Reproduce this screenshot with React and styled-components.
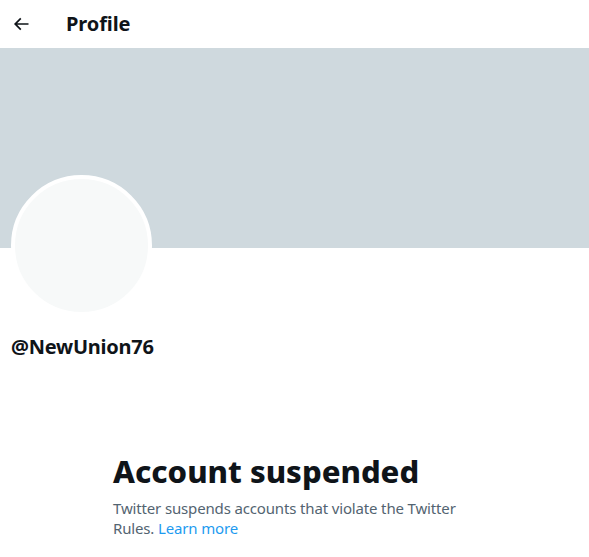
import React from 'react';
import styled, { createGlobalStyle } from 'styled-components';

const GlobalStyle = createGlobalStyle`
  body {
    margin: 0;
    background: #ffffff;
    font-family: "Segoe UI", "Noto Sans", Roboto, sans-serif;
    color: #0f1419;
  }
`;

const Page = styled.div`
  width: 589px;
`;

const TopBar = styled.header`
  height: 48px;
  display: flex;
  align-items: center;
  padding: 0 11px;
  gap: 35px;
  box-sizing: border-box;
  h2 {
    margin: 0;
    font-size: 20px;
    font-weight: 700;
    line-height: 24px;
    letter-spacing: -0.1px;
  }
`;

const BackButton = styled.div`
  width: 20px;
  height: 20px;
  display: flex;
  align-items: center;
  justify-content: center;
`;

const Banner = styled.div`
  height: 200px;
  background: #cfd9de;
`;

const ProfileInfo = styled.div`
  padding: 0 11px;
`;

const Avatar = styled.div`
  width: 133px;
  height: 133px;
  margin-top: -73px;
  border-radius: 50%;
  border: 4px solid #ffffff;
  background: #f7f9f9;
`;

const Handle = styled.div`
  margin-top: 19px;
  font-size: 20px;
  font-weight: 700;
  line-height: 24px;
  letter-spacing: -0.25px;
`;

const EmptyState = styled.div`
  margin-top: 94px;
  padding-left: 113px;
  max-width: 352px;
  h1 {
    margin: 0;
    font-size: 31px;
    font-weight: 800;
    line-height: 36px;
  }
  p {
    margin: 9px 0 0;
    font-size: 15px;
    line-height: 20px;
    letter-spacing: -0.15px;
    color: #536471;
  }
  a {
    color: #1d9bf0;
    text-decoration: none;
  }
`;

export default function App() {
  return (
    <Page>
      <GlobalStyle />
      <TopBar>
        <BackButton>
          <svg width="20" height="20" viewBox="0 0 24 24">
            <path fill="#0f1419" d="M7.414 13l5.043 5.04-1.414 1.42L3.586 12l7.457-7.46 1.414 1.42L7.414 11H21v2H7.414z" />
          </svg>
        </BackButton>
        <h2>Profile</h2>
      </TopBar>
      <Banner />
      <ProfileInfo>
        <Avatar />
        <Handle>@NewUnion76</Handle>
      </ProfileInfo>
      <EmptyState>
        <h1>Account suspended</h1>
        <p>
          Twitter suspends accounts that violate the Twitter Rules. <a href="#">Learn more</a>
        </p>
      </EmptyState>
    </Page>
  );
}
